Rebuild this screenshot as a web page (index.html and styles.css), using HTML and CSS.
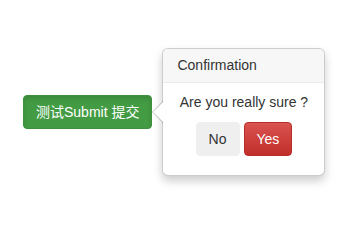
FILE: index.html
```html
<!DOCTYPE html>
<html>
<head>
<meta charset="utf-8">
<link rel="stylesheet" href="styles.css">
</head>
<body>
<div class="stage">
  <div class="anchor">
    <button class="btn btn-success">测试Submit 提交</button>
    <div class="popover">
      <div class="arrow"></div>
      <h3 class="popover-title">Confirmation</h3>
      <div class="popover-content">
        <p class="question">Are you really sure ?</p>
        <div class="actions">
          <button class="btn btn-default">No</button>
          <button class="btn btn-danger">Yes</button>
        </div>
      </div>
    </div>
  </div>
</div>
</body>
</html>
```
FILE: styles.css
```css
html, body {
  margin: 0;
  padding: 0;
  background: #fff;
}
body {
  font-family: "Liberation Sans", Arial, "Noto Sans CJK SC", sans-serif;
  font-size: 14px;
  color: #333;
}
.stage {
  box-sizing: border-box;
  min-height: 230px;
  padding: 95px 0 0 23px;
}
.anchor {
  position: relative;
  display: inline-block;
}
.btn {
  display: inline-block;
  box-sizing: border-box;
  height: 34px;
  margin: 0;
  padding: 6px 12px;
  font-family: inherit;
  font-size: 14px;
  line-height: 20px;
  border: 1px solid transparent;
  border-radius: 4px;
  cursor: pointer;
  vertical-align: middle;
}
.btn-success {
  color: #fff;
  background: #439c43;
  border-color: #3e8f3e;
  box-shadow: inset 0 3px 5px rgba(0, 0, 0, 0.125);
}
.btn-default {
  color: #333;
  background: #efefef;
  border-color: #efefef;
}
.btn-danger {
  color: #fff;
  background: linear-gradient(to bottom, #d9534f 0, #c12e2a 100%);
  border-color: #b92c28;
}
.popover {
  position: absolute;
  left: calc(100% + 10px);
  top: -47px;
  width: 163px;
  box-sizing: border-box;
  background: #fff;
  border: 1px solid rgba(0, 0, 0, 0.2);
  border-radius: 6px;
  box-shadow: 0 5px 10px rgba(0, 0, 0, 0.2);
  text-align: left;
}
.arrow {
  position: absolute;
  left: -11px;
  top: 50%;
  margin-top: -11px;
  width: 0;
  height: 0;
  border-style: solid;
  border-width: 11px 11px 11px 0;
  border-color: transparent rgba(0, 0, 0, 0.25) transparent transparent;
}
.arrow::after {
  content: "";
  position: absolute;
  left: 1px;
  top: -10px;
  width: 0;
  height: 0;
  border-style: solid;
  border-width: 10px 10px 10px 0;
  border-color: transparent #fff transparent transparent;
}
.popover-title {
  margin: 0;
  padding: 8px 14px;
  font-size: 14px;
  font-weight: normal;
  line-height: 17px;
  background: #f7f7f7;
  border-bottom: 1px solid #ebebeb;
  border-radius: 5px 5px 0 0;
}
.popover-content {
  padding: 9px 14px 19px;
  text-align: center;
}
.question {
  margin: 0 0 10px;
  line-height: 20px;
  white-space: nowrap;
}
.actions {
  display: flex;
  justify-content: center;
  gap: 4px;
  height: 34px;
}
```
